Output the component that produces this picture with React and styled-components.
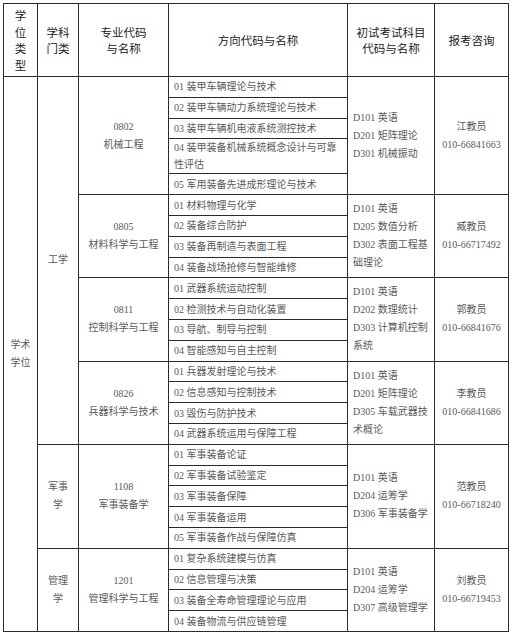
import styled, { createGlobalStyle } from "styled-components";

const GlobalStyle = createGlobalStyle`
    body {
        margin: 0;
        background: #fff;
    }
`;

const Page = styled.div`
    padding: 3px 0 0 3px;
`;

const Table = styled.table`
    border-collapse: collapse;
    table-layout: fixed;
    width: 505px;
    border: 1px solid #2a2a2a;
    font-family: "Liberation Serif", "Noto Sans CJK SC", serif;
    font-size: 10px;
    color: #5a5a5a;
`;

const Col = styled.col`
    width: ${(p) => p.$w}px;
`;

const HeadRow = styled.tr`
    height: 73px;
`;

const Th = styled.th`
    border: 1px solid #2a2a2a;
    font-family: "Noto Sans CJK SC", sans-serif;
    font-weight: normal;
    font-size: 11.5px;
    line-height: 16.5px;
    color: #222;
    text-align: center;
    vertical-align: middle;
    padding: 0;
`;

const Cell = styled.td`
    border: 1px solid #2a2a2a;
    text-align: ${(p) => (p.$left ? "left" : "center")};
    vertical-align: middle;
    line-height: 18px;
    padding: ${(p) => (p.$left ? "0 4px 0 5px" : "0 2px")};
    word-break: break-all;
`;

const DirCell = styled.td`
    border: 1px solid #2a2a2a;
    height: 19.8px;
    padding: 0 8px 0 5px;
    line-height: 17px;
    vertical-align: middle;
    word-break: break-all;
`;

const Line = styled.div`
    white-space: nowrap;
`;

const Lines = ({ items }) => items.map((t) => <Line key={t}>{t}</Line>);

const majors = [
    {
        disc: ["工学"],
        code: "0802",
        name: "机械工程",
        dirs: [
            "01 装甲车辆理论与技术",
            "02 装甲车辆动力系统理论与技术",
            "03 装甲车辆机电液系统测控技术",
            "04 装甲装备机械系统概念设计与可靠性评估",
            "05 军用装备先进成形理论与技术",
        ],
        exams: ["D101 英语", "D201 矩阵理论", "D301 机械振动"],
        contact: "江教员",
        phone: "010-66841663",
    },
    {
        disc: ["工学"],
        code: "0805",
        name: "材料科学与工程",
        dirs: [
            "01 材料物理与化学",
            "02 装备综合防护",
            "03 装备再制造与表面工程",
            "04 装备战场抢修与智能维修",
        ],
        exams: ["D101 英语", "D205 数值分析", "D302 表面工程基础理论"],
        contact: "臧教员",
        phone: "010-66717492",
    },
    {
        disc: ["工学"],
        code: "0811",
        name: "控制科学与工程",
        dirs: [
            "01 武器系统运动控制",
            "02 检测技术与自动化装置",
            "03 导航、制导与控制",
            "04 智能感知与自主控制",
        ],
        exams: ["D101 英语", "D202 数理统计", "D303 计算机控制系统"],
        contact: "郭教员",
        phone: "010-66841676",
    },
    {
        disc: ["工学"],
        code: "0826",
        name: "兵器科学与技术",
        dirs: [
            "01 兵器发射理论与技术",
            "02 信息感知与控制技术",
            "03 毁伤与防护技术",
            "04 武器系统运用与保障工程",
        ],
        exams: ["D101 英语", "D201 矩阵理论", "D305 车载武器技术概论"],
        contact: "李教员",
        phone: "010-66841686",
    },
    {
        disc: ["军事", "学"],
        code: "1108",
        name: "军事装备学",
        dirs: [
            "01 军事装备论证",
            "02 军事装备试验鉴定",
            "03 军事装备保障",
            "04 军事装备运用",
            "05 军事装备作战与保障仿真",
        ],
        exams: ["D101 英语", "D204 运筹学", "D306 军事装备学"],
        contact: "范教员",
        phone: "010-66718240",
    },
    {
        disc: ["管理", "学"],
        code: "1201",
        name: "管理科学与工程",
        dirs: [
            "01 复杂系统建模与仿真",
            "02 信息管理与决策",
            "03 装备全寿命管理理论与应用",
            "04 装备物流与供应链管理",
        ],
        exams: ["D101 英语", "D204 运筹学", "D307 高级管理学"],
        contact: "刘教员",
        phone: "010-66719453",
    },
];

const totalRows = majors.reduce((n, m) => n + m.dirs.length, 0);

function discSpan(i) {
    const key = majors[i].disc.join("");
    if (i > 0 && majors[i - 1].disc.join("") === key) return 0;
    let n = 0;
    for (let j = i; j < majors.length && majors[j].disc.join("") === key; j++) {
        n += majors[j].dirs.length;
    }
    return n;
}

function App() {
    return (
        <Page>
            <GlobalStyle />
            <Table>
                <colgroup>
                    <Col $w={34} />
                    <Col $w={41} />
                    <Col $w={90} />
                    <Col $w={179} />
                    <Col $w={87} />
                    <Col $w={74} />
                </colgroup>
                <thead>
                    <HeadRow>
                        <Th>
                            <Lines items={["学", "位", "类", "型"]} />
                        </Th>
                        <Th>
                            <Lines items={["学科", "门类"]} />
                        </Th>
                        <Th>
                            <Lines items={["专业代码", "与名称"]} />
                        </Th>
                        <Th>方向代码与名称</Th>
                        <Th>
                            <Lines items={["初试考试科目", "代码与名称"]} />
                        </Th>
                        <Th>报考咨询</Th>
                    </HeadRow>
                </thead>
                <tbody>
                    {majors.map((m, i) => {
                        const span = discSpan(i);
                        return m.dirs.map((d, k) => (
                            <tr key={m.code + k}>
                                {i === 0 && k === 0 && (
                                    <Cell rowSpan={totalRows}>
                                        <Lines items={["学术", "学位"]} />
                                    </Cell>
                                )}
                                {k === 0 && span > 0 && (
                                    <Cell rowSpan={span}>
                                        <Lines items={m.disc} />
                                    </Cell>
                                )}
                                {k === 0 && (
                                    <Cell rowSpan={m.dirs.length}>
                                        <Lines items={[m.code, m.name]} />
                                    </Cell>
                                )}
                                <DirCell>{d}</DirCell>
                                {k === 0 && (
                                    <Cell rowSpan={m.dirs.length} $left>
                                        {m.exams.map((e) => (
                                            <div key={e}>{e}</div>
                                        ))}
                                    </Cell>
                                )}
                                {k === 0 && (
                                    <Cell rowSpan={m.dirs.length}>
                                        <Lines items={[m.contact, m.phone]} />
                                    </Cell>
                                )}
                            </tr>
                        ));
                    })}
                </tbody>
            </Table>
        </Page>
    );
}

export default App;
